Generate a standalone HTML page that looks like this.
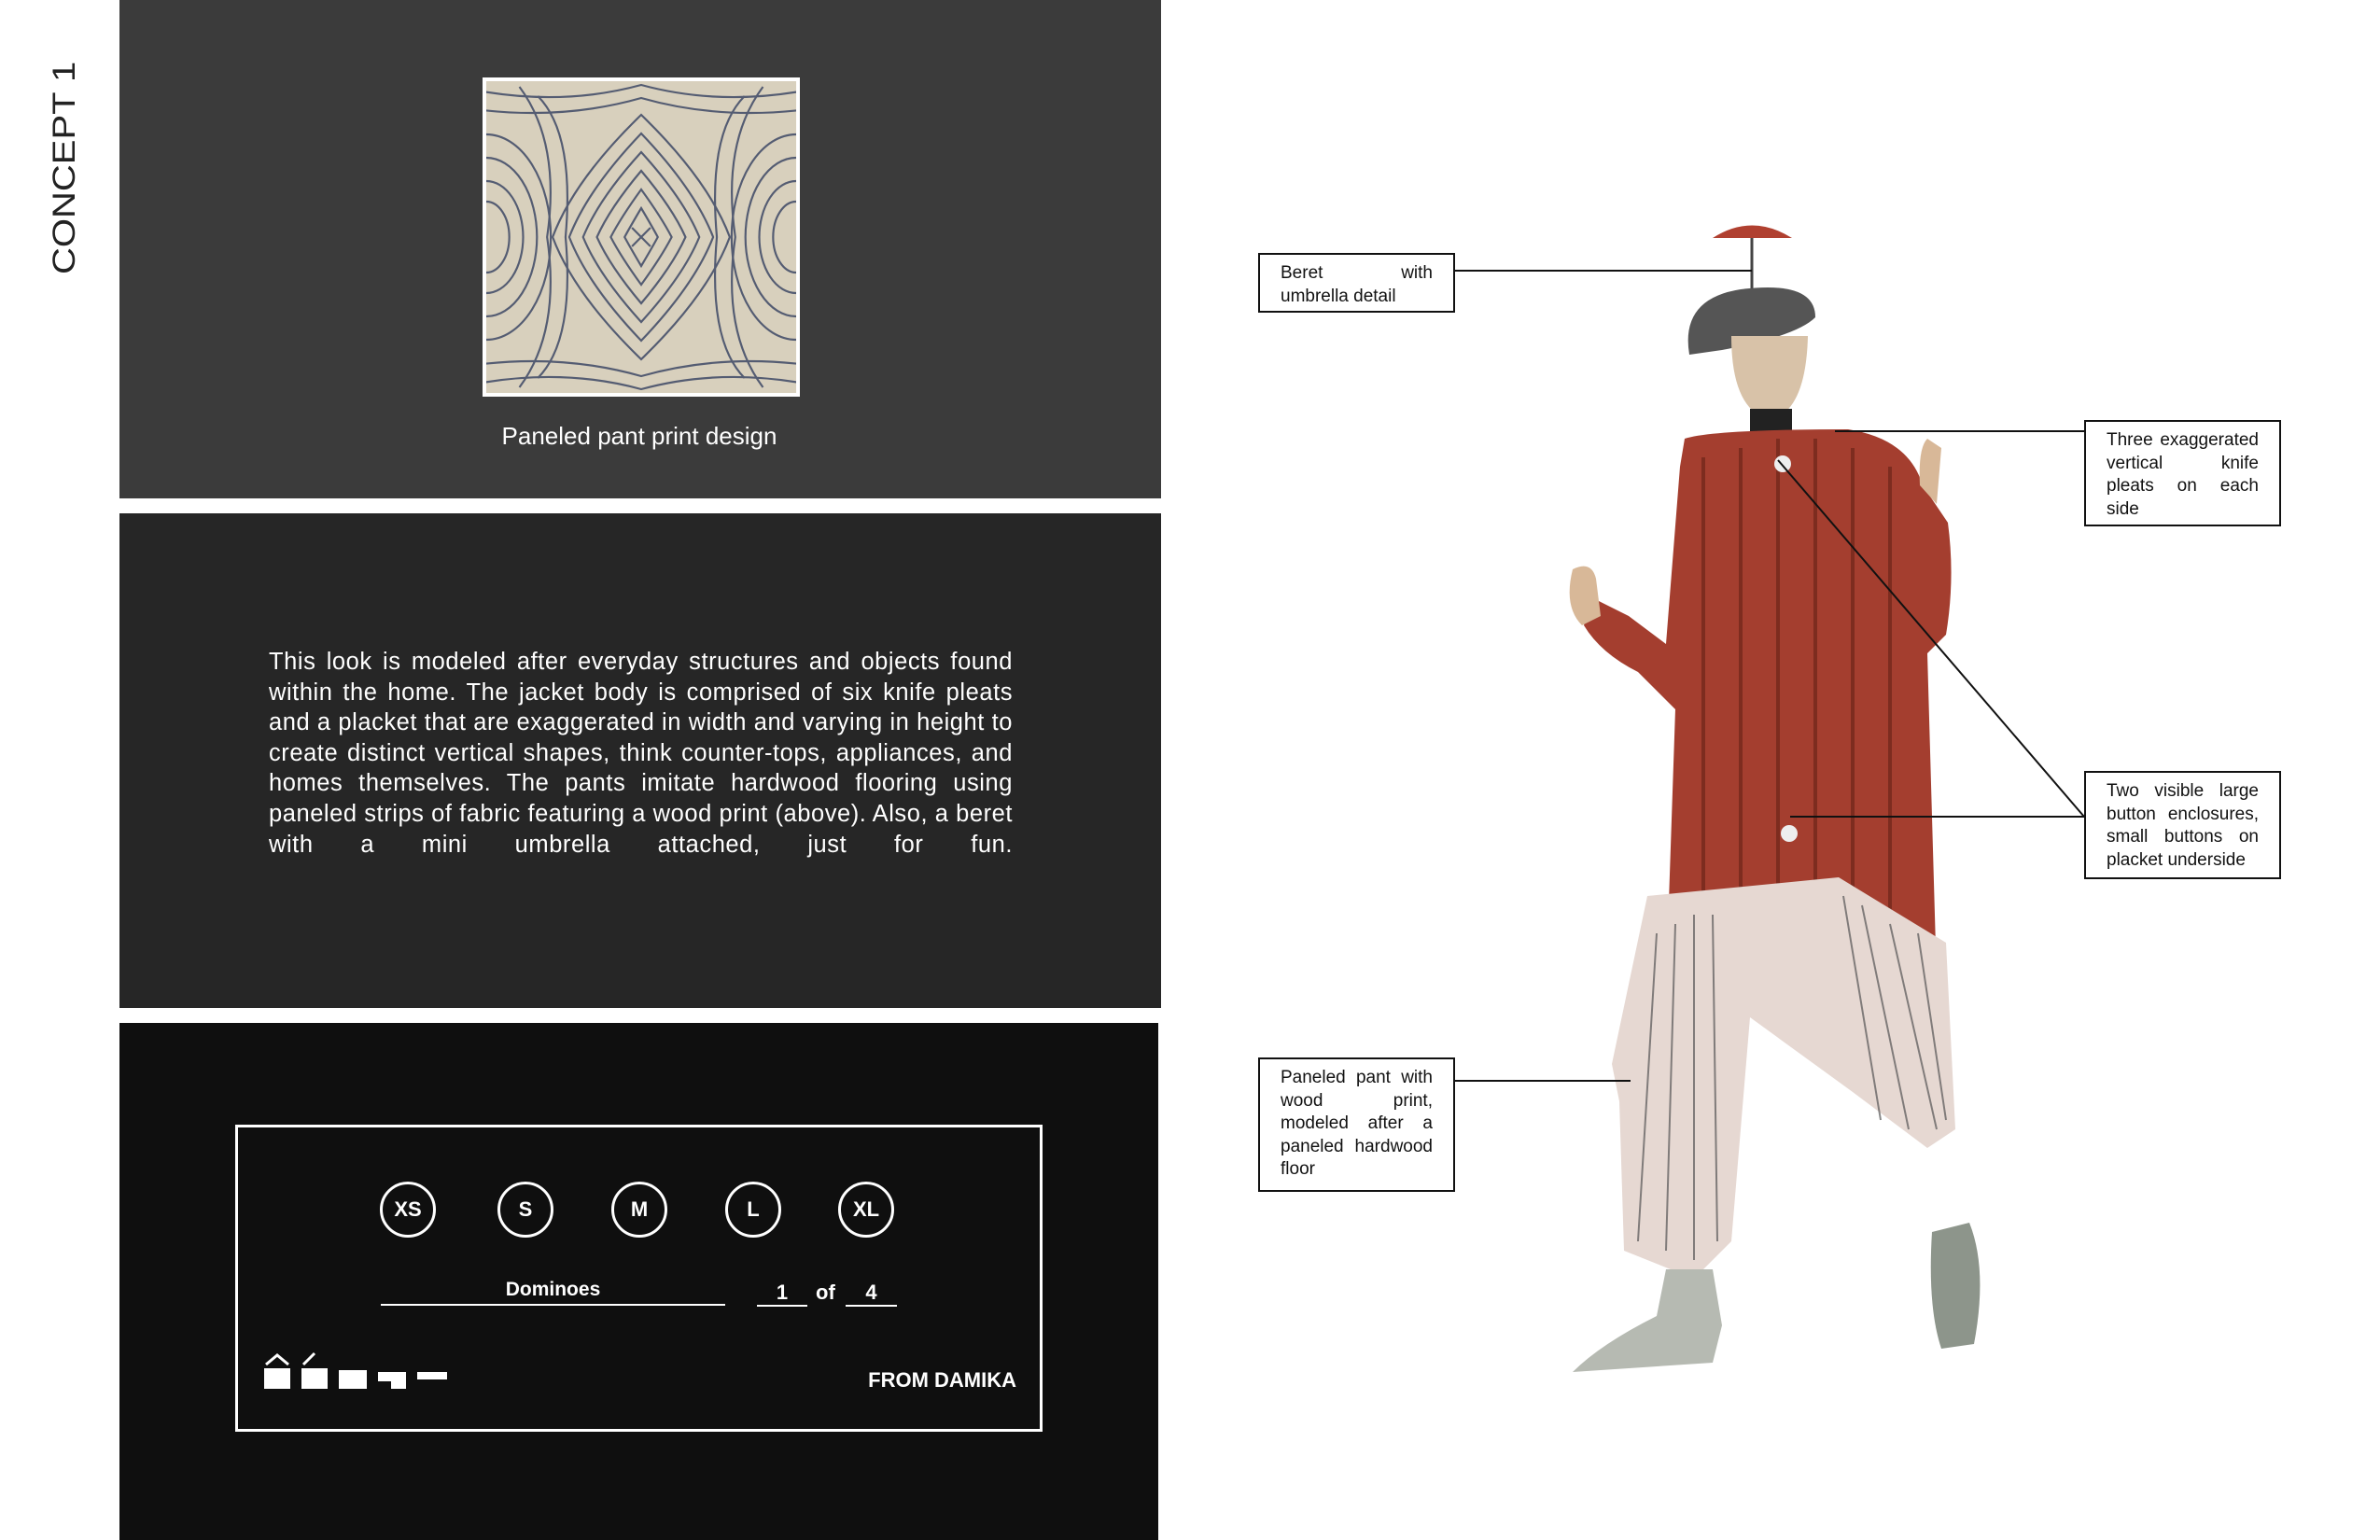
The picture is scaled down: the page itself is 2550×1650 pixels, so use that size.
<!DOCTYPE html>
<html><head><meta charset="utf-8"><style>
*{margin:0;padding:0;box-sizing:border-box}
body{width:2550px;height:1650px;background:#fff;position:relative;overflow:hidden;font-family:"Liberation Sans",sans-serif}
.abs{position:absolute}
.p{position:absolute;left:128px;width:1116px}
.lbl{position:absolute;border:2px solid #111;background:#fff;padding:8px 22px;font-size:19px;line-height:24.5px;color:#111;text-align:justify}
.ln{position:absolute;background:#111;height:2px}
.c{position:absolute;width:60px;height:60px;border:3px solid #fff;border-radius:50%;color:#fff;font-weight:bold;font-size:22px;text-align:center;line-height:54px;top:1266px}
</style></head><body>
<div class="abs" style="left:50px;top:294px;transform:rotate(-90deg) scaleY(0.85);transform-origin:0 0;font-size:40px;color:#222;letter-spacing:0px;white-space:nowrap">CONCEPT 1</div>

<div class="p" style="top:0;height:534px;background:#3b3b3b"></div>
<svg class="abs" style="left:517px;top:83px" width="340" height="342" viewBox="0 0 344 342" preserveAspectRatio="none">
<rect x="0" y="0" width="344" height="342" fill="#fff"/>
<rect x="4" y="4" width="336" height="334" fill="#d8d0bd"/>
<clipPath id="cp"><rect x="4" y="4" width="336" height="334"/></clipPath>
<g fill="none" stroke="#3e4866" stroke-width="2.2" opacity=".85" clip-path="url(#cp)">
<path d="M172 60 Q230 120 250 171 Q230 222 172 282 Q114 222 94 171 Q114 120 172 60Z"/>
<path d="M172 80 Q218 130 235 171 Q218 212 172 262 Q126 212 109 171 Q126 130 172 80Z"/>
<path d="M172 100 Q206 140 220 171 Q206 202 172 242 Q138 202 124 171 Q138 140 172 100Z"/>
<path d="M172 120 Q194 150 205 171 Q194 192 172 222 Q150 192 139 171 Q150 150 172 120Z"/>
<path d="M172 140 Q184 160 190 171 Q184 182 172 202 Q160 182 154 171 Q160 160 172 140Z"/>
<path d="M172 40 Q245 110 268 171 Q245 232 172 302 Q99 232 76 171 Q99 110 172 40Z"/>
<path d="M162 161 L182 181 M182 161 L162 181"/>
<ellipse cx="4" cy="171" rx="40" ry="60"/><ellipse cx="4" cy="171" rx="55" ry="85"/><ellipse cx="4" cy="171" rx="25" ry="38"/><ellipse cx="4" cy="171" rx="70" ry="110"/>
<ellipse cx="340" cy="171" rx="40" ry="60"/><ellipse cx="340" cy="171" rx="55" ry="85"/><ellipse cx="340" cy="171" rx="25" ry="38"/><ellipse cx="340" cy="171" rx="70" ry="110"/>
<path d="M0 15 Q90 30 172 8 Q254 30 344 15"/><path d="M0 35 Q90 45 172 22 Q254 45 344 35"/>
<path d="M0 327 Q90 312 172 334 Q254 312 344 327"/><path d="M0 307 Q90 297 172 320 Q254 297 344 307"/>
<path d="M60 20 Q100 60 90 171 Q100 282 60 322"/><path d="M284 20 Q244 60 254 171 Q244 282 284 322"/>
<path d="M40 10 Q85 70 70 171 Q85 272 40 332"/><path d="M304 10 Q259 70 274 171 Q259 272 304 332"/>
</g></svg>
<div class="abs" style="left:422px;top:452px;width:526px;text-align:center;color:#fff;font-size:26px">Paneled pant print design</div>

<div class="p" style="top:550px;height:530px;background:#262626"></div>
<div class="abs" style="left:288px;top:693px;width:797px;color:#fff;font-size:25.5px;line-height:32.6px;text-align:justify;text-align-last:justify;letter-spacing:.55px;word-spacing:-1px">This look is modeled after everyday structures and objects found within the home. The jacket body is comprised of six knife pleats and a placket that are exaggerated in width and varying in height to create distinct vertical shapes, think counter-tops, appliances, and homes themselves. The pants imitate hardwood flooring using paneled strips of fabric featuring a wood print (above). Also, a beret with a mini umbrella attached, just for fun.</div>

<div class="p" style="top:1096px;height:554px;width:1113px;background:#0f0f0f"></div>
<div class="abs" style="left:252px;top:1205px;width:865px;height:329px;border:3px solid #fff"></div>
<div class="c" style="left:407px">XS</div><div class="c" style="left:533px">S</div><div class="c" style="left:655px">M</div><div class="c" style="left:777px">L</div><div class="c" style="left:898px">XL</div>
<div class="abs" style="left:408px;top:1370px;width:369px;text-align:center;color:#fff;font-weight:bold;font-size:21px">Dominoes</div>
<div class="abs" style="left:408px;top:1397px;width:369px;height:2px;background:#fff"></div>
<div class="abs" style="left:811px;top:1372px;width:54px;text-align:center;color:#fff;font-weight:bold;font-size:22px">1</div>
<div class="abs" style="left:811px;top:1398px;width:54px;height:2px;background:#fff"></div>
<div class="abs" style="left:874px;top:1372px;color:#fff;font-weight:bold;font-size:22px">of</div>
<div class="abs" style="left:906px;top:1372px;width:55px;text-align:center;color:#fff;font-weight:bold;font-size:22px">4</div>
<div class="abs" style="left:906px;top:1398px;width:55px;height:2px;background:#fff"></div>
<svg class="abs" style="left:281px;top:1442px" width="205" height="48" viewBox="0 0 205 48" fill="#fff" stroke="#fff">
<path d="M4 20 L16 10 L28 20" fill="none" stroke-width="3"/><rect x="2" y="24" width="28" height="22" stroke="none"/>
<path d="M44 20 L56 8" fill="none" stroke-width="3"/><rect x="42" y="24" width="28" height="22" stroke="none"/>
<rect x="82" y="26" width="30" height="20" stroke="none"/>
<rect x="124" y="28" width="30" height="18" stroke="none"/><rect x="124" y="38" width="14" height="8" fill="#0f0f0f" stroke="none"/>
<rect x="166" y="28" width="32" height="8" stroke="none"/>
</svg>
<div class="abs" style="left:850px;width:239px;text-align:right;top:1466px;color:#fff;font-weight:bold;font-size:22px">FROM DAMIKA</div>

<svg class="abs" style="left:0;top:0" width="2550" height="1650">
<g transform="translate(-15,0)">
<path d="M1850 255 Q1892 228 1935 255 Z" fill="#b04030"/>
<path d="M1892 255 L1892 310" stroke="#444" stroke-width="3"/>
<path d="M1825 380 Q1815 320 1880 310 Q1960 300 1960 340 Q1940 360 1860 375 Z" fill="#555"/>
<path d="M1870 360 Q1870 440 1912 450 Q1950 440 1952 360 Z" fill="#d8c2a8"/>
<rect x="1890" y="438" width="45" height="30" fill="#222"/>
<path d="M1820 470 Q1850 460 1995 460 Q2060 470 2075 520 L2102 560 Q2110 620 2100 680 L2080 700 L2090 1050 L1985 1000 L1800 1055 L1810 760 L1770 720 Q1730 700 1712 670 L1720 640 L1760 660 L1800 690 L1815 500 Z" fill="#a43e2f"/>
<path d="M2072 520 Q2070 480 2080 470 L2095 480 L2090 540 Z" fill="#d8b898"/>
<path d="M1700 610 Q1720 600 1725 620 L1730 660 L1710 670 Q1690 650 1700 610Z" fill="#d8b898"/>
<g stroke="#6d2519" stroke-width="4" opacity=".7"><path d="M1840 490 L1840 1040 M1880 480 L1880 1000 M1920 470 L1920 950 M1960 470 L1960 960 M2000 480 L2000 1000 M2040 500 L2040 1040"/></g>
<circle cx="1925" cy="497" r="9" fill="#eee"/><circle cx="1932" cy="893" r="9" fill="#eee"/>
<path d="M1780 960 L1985 940 L2100 1010 L2110 1210 L2080 1230 L2000 1170 L1890 1090 L1870 1330 L1830 1370 L1755 1340 L1750 1180 L1742 1140 Z" fill="#e6d8d2"/>
<g stroke="#555" stroke-width="2" opacity=".7"><path d="M1790 1000 L1770 1330 M1810 990 L1800 1340 M1830 980 L1830 1350 M1850 980 L1855 1330 M1990 960 L2030 1200 M2010 970 L2060 1210 M2040 990 L2090 1210 M2070 1000 L2100 1200"/></g>
<path d="M1800 1360 L1850 1360 L1860 1420 L1850 1460 L1700 1470 Q1730 1440 1790 1410 Z" fill="#b6bab2"/>
<path d="M2085 1320 L2125 1310 Q2145 1360 2130 1440 L2095 1445 Q2080 1400 2085 1320Z" fill="#8d958b"/>
</g>
<line x1="1905" y1="493" x2="2233" y2="875" stroke="#111" stroke-width="2"/>
</svg>
<div class="lbl" style="left:1348px;top:271px;width:211px;height:64px">Beret &nbsp; &nbsp; &nbsp; &nbsp; &nbsp; &nbsp; &nbsp;with umbrella detail</div>
<div class="ln" style="left:1559px;top:289px;width:318px"></div>
<div class="lbl" style="left:2233px;top:450px;width:211px;height:114px">Three exaggerated vertical &nbsp; &nbsp; &nbsp; &nbsp;knife pleats &nbsp; on &nbsp; each side</div>
<div class="ln" style="left:1966px;top:461px;width:267px"></div>
<div class="lbl" style="left:2233px;top:826px;width:211px;height:116px">Two visible large button enclosures, small buttons on placket underside</div>
<div class="ln" style="left:1918px;top:874px;width:315px"></div>
<div class="lbl" style="left:1348px;top:1133px;width:211px;height:144px">Paneled pant with wood &nbsp; &nbsp; &nbsp; &nbsp; &nbsp; print, modeled after a paneled hardwood floor</div>
<div class="ln" style="left:1559px;top:1157px;width:188px"></div>
</body></html>
